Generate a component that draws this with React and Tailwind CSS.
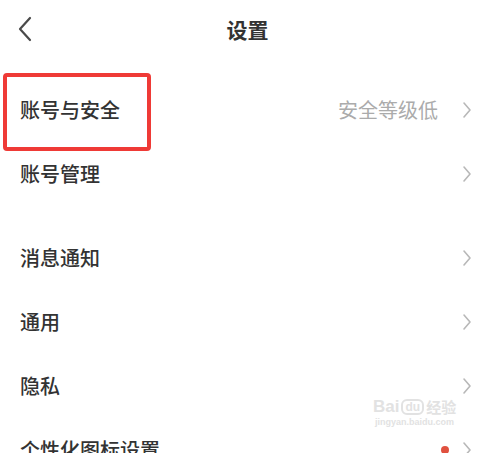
import React from "react";

const font = { fontFamily: '"Noto Sans CJK SC", "Noto Sans", sans-serif' };

function Chevron() {
  return (
    <svg width="10" height="18" viewBox="0 0 10 18" className="shrink-0">
      <path d="M2 2 L8 9 L2 16" fill="none" stroke="#b8b8b8" strokeWidth="1.6" strokeLinecap="round" strokeLinejoin="round" />
    </svg>
  );
}

function Row({ label, right, dot }) {
  return (
    <div className="flex h-[64px] items-center pl-[20px] pr-[19px]">
      <span className="text-[20px] font-medium text-[#333333] leading-none">{label}</span>
      <div className="ml-auto flex items-center">
        {right && <span className="mr-[24px] text-[20px] text-[#ababab] leading-none">{right}</span>}
        {dot && <span className="mr-[13px] h-[8px] w-[8px] rounded-full bg-[#e0513f]" />}
        <Chevron />
      </div>
    </div>
  );
}

export default function App() {
  return (
    <div className="relative h-[453px] w-[491px] overflow-hidden bg-white" style={font}>
      <div className="relative flex h-[60px] items-center justify-center">
        <svg width="16" height="26" viewBox="0 0 16 26" className="absolute left-[17px] top-[16px]">
          <path d="M13 2 L3 13 L13 24" fill="none" stroke="#4a4a4a" strokeWidth="2.2" strokeLinecap="round" strokeLinejoin="round" />
        </svg>
        <span className="pl-[4px] text-[21px] font-semibold text-[#333333]">设置</span>
      </div>
      <div className="pt-[18px]">
        <Row label="账号与安全" right="安全等级低" />
        <Row label="账号管理" />
        <div className="h-[20px]" />
        <Row label="消息通知" />
        <Row label="通用" />
        <Row label="隐私" />
        <Row label="个性化图标设置" dot />
      </div>
      <div className="absolute left-[3px] top-[73px] h-[78px] w-[148px] rounded-[4px] border-[4px] border-[#ef3a36]" />
      <div className="pointer-events-none absolute left-[373px] top-[398px] flex flex-col items-center text-[#e2e2e2]" style={{ fontFamily: '"Liberation Sans", "Noto Sans CJK SC", sans-serif' }}>
        <div className="flex items-end text-[17px] font-bold leading-none">
          <span>Bai</span>
          <span className="mx-[2px] rounded-[6px] border-[2px] border-[#e2e2e2] px-[2px] text-[12px]">du</span>
          <span className="text-[15px]">经验</span>
        </div>
        <span className="mt-[3px] text-[9px] font-bold leading-none">jingyan.baidu.com</span>
      </div>
    </div>
  );
}
